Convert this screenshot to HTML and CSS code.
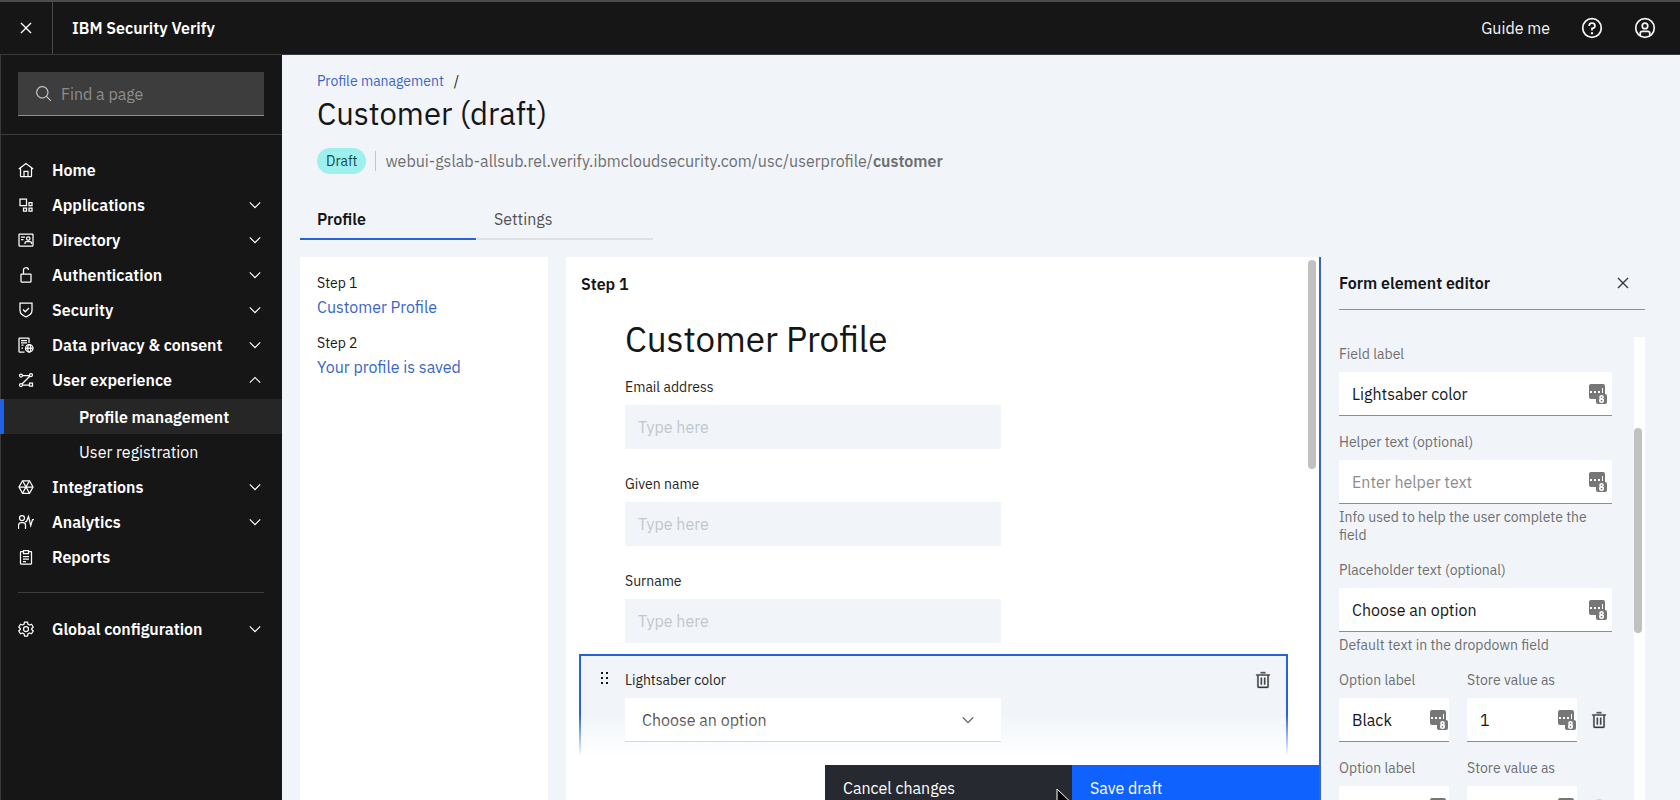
FILE: index.html
```
<!DOCTYPE html>
<html lang="en">
<head>
  <meta charset="UTF-8">
  <meta name="viewport" content="width=device-width, initial-scale=1">
  <title>Customer (draft) - IBM Security Verify</title>
  <link rel="stylesheet" href="styles.css">
</head>
<body>
  <!-- Icon sprite -->
  <svg class="sprite" aria-hidden="true">
    <symbol id="i-close" viewBox="0 0 32 32"><path fill="currentColor" d="M24 9.4L22.6 8 16 14.6 9.4 8 8 9.4 14.6 16 8 22.6 9.4 24 16 17.4 22.6 24 24 22.6 17.4 16z"/></symbol>
    <symbol id="i-chevron" viewBox="0 0 16 16"><path fill="currentColor" d="M8 11L3 6l.7-.7L8 9.6l4.3-4.3.7.7z"/></symbol>
    <symbol id="i-search" viewBox="0 0 32 32"><path fill="currentColor" d="M29 27.586l-7.552-7.552a11.018 11.018 0 1 0-1.414 1.414L27.586 29zM4 13a9 9 0 1 1 9 9 9.01 9.01 0 0 1-9-9z"/></symbol>
    <symbol id="i-help" viewBox="0 0 32 32"><g fill="none" stroke="currentColor" stroke-width="2.500"><circle cx="16" cy="16" r="13.500"/><path d="M12 13v-.5A3.5 3.5 0 0 1 15.500 9h1a3.500 3.500 0 0 1 0 7.500H16v3"/></g><circle cx="16" cy="23.500" r="1.700" fill="currentColor"/></symbol>
    <symbol id="i-user" viewBox="0 0 32 32"><g fill="none" stroke="currentColor" stroke-width="2.500"><circle cx="16" cy="16" r="13.500"/><circle cx="16" cy="13" r="4"/><path d="M9 26.500V24a3 3 0 0 1 3-3h8a3 3 0 0 1 3 3v2.500"/></g></symbol>
    <symbol id="i-home" viewBox="0 0 32 32"><g fill="none" stroke="currentColor" stroke-width="2.500"><path d="M1.600 14.200L16 3l14.400 11.200M5 12v16a1 1 0 0 0 1 1h20a1 1 0 0 0 1-1V12"/><path d="M12 29V18.500h8V29"/></g></symbol>
    <symbol id="i-apps" viewBox="0 0 32 32"><g fill="none" stroke="currentColor" stroke-width="2.500"><path d="M4 4h13v13H4z"/><path d="M22 11h6v6h-6zM11 22h6v6h-6zM22 22h6v6h-6z"/></g></symbol>
    <symbol id="i-directory" viewBox="0 0 32 32"><g fill="none" stroke="currentColor" stroke-width="2.500"><rect x="2" y="4" width="28" height="24" rx="1"/><path d="M6 10h8M6 15h5"/><circle cx="20.500" cy="13" r="3.500"/><path d="M14 24v-2a3 3 0 0 1 3-3h7a3 3 0 0 1 3 3v2"/></g></symbol>
    <symbol id="i-lock" viewBox="0 0 32 32"><g fill="none" stroke="currentColor" stroke-width="2.500"><rect x="6" y="14" width="20" height="16" rx="1"/><path d="M11 14V7a5 5 0 0 1 10-1"/></g></symbol>
    <symbol id="i-shield" viewBox="0 0 32 32"><g fill="none" stroke="currentColor" stroke-width="2.500"><path d="M4 2h24v15c0 5-3 9-12 13C7 26 4 22 4 17z"/><path d="M10 15l4.500 4.500L22 12"/></g></symbol>
    <symbol id="i-privacy" viewBox="0 0 32 32"><g fill="none" stroke="currentColor" stroke-width="2.500"><path d="M13 30H3a1 1 0 0 1-1-1V3a1 1 0 0 1 1-1h18a1 1 0 0 1 1 1v9"/><path d="M6 7h12M6 11.500h12M7 16h4M7 22h3"/><circle cx="22.500" cy="22.500" r="7.500"/><ellipse cx="22.500" cy="22.500" rx="3" ry="7.500"/><path d="M15 22.500h15"/></g></symbol>
    <symbol id="i-flow" viewBox="0 0 32 32"><g fill="none" stroke="currentColor" stroke-width="2.500"><circle cx="6" cy="7" r="3"/><circle cx="26" cy="6" r="3"/><circle cx="6" cy="26" r="3"/><path d="M23 22h6v6h-6zM9 7h14M24 8L8 24M9 26h14"/></g></symbol>
    <symbol id="i-integrations" viewBox="0 0 32 32"><g fill="none" stroke="currentColor" stroke-width="2.500"><path d="M9 3.500h14L30 16l-7 12.500H9L2 16z"/><path d="M2 16h28M9 3.500l14 25M23 3.500l-14 25"/></g></symbol>
    <symbol id="i-analytics" viewBox="0 0 32 32"><g fill="none" stroke="currentColor" stroke-width="2.500"><circle cx="8" cy="8" r="5"/><path d="M1 30v-7a6 6 0 0 1 6-6h3a5 5 0 0 1 5 5v8M14 15h3l4-10 4.500 18L29 11h3"/></g></symbol>
    <symbol id="i-reports" viewBox="0 0 32 32"><g fill="none" stroke="currentColor" stroke-width="2.500"><path d="M10 5H6a1 1 0 0 0-1 1v23a1 1 0 0 0 1 1h20a1 1 0 0 0 1-1V6a1 1 0 0 0-1-1h-4M11 3h10v6H11zM10 15h12M10 20h12M10 25h6"/></g></symbol>
    <symbol id="i-gear" viewBox="0 0 32 32"><g fill="none" stroke="currentColor" stroke-width="2.500" stroke-linejoin="round"><circle cx="16" cy="16" r="5"/><path d="M13 2h6l1 4.500 3 1.500 4-1.500 3.500 5.500-3 3v2l3 3-3.500 5.500-4-1.500-3 1.500-1 4.500h-6l-1-4.500L9 24l-4 1.500L1.500 20l3-3v-2l-3-3L5 6.500 9 8l3-1.500z"/></g></symbol>
    <symbol id="i-trash" viewBox="0 0 32 32"><path fill="currentColor" stroke="currentColor" stroke-width=".7" d="M12 12h2v12h-2zM18 12h2v12h-2zM4 6v2h2v20a2 2 0 0 0 2 2h16a2 2 0 0 0 2-2V8h2V6zm4 22V8h16v20zM12 2h8v2h-8z"/></symbol>
    <symbol id="i-drag" viewBox="0 0 10 14"><path fill="currentColor" d="M1 1h2v2H1zM6 1h2v2H6zM1 6h2v2H1zM6 6h2v2H6zM1 11h2v2H1zM6 11h2v2H6z"/></symbol>
    <symbol id="i-keypad" viewBox="0 0 18 20"><path fill="#777" d="M2 0h12a2 2 0 0 1 2 2v9H9a2 2 0 0 0-2 2v2H2a2 2 0 0 1-2-2V2a2 2 0 0 1 2-2z"/><path fill="#fff" d="M1 7h2v2H1zM5 7h2v2H5zM9 7h2v2H9zM13 4h1v5h-1z"/><rect x="7" y="10" width="11" height="10" rx="2" fill="#777"/><g fill="none" stroke="#fff" stroke-width="1.600"><circle cx="12.500" cy="13.200" r="1.500"/><circle cx="12.500" cy="16.600" r="1.700"/></g></symbol>
  </svg>

  <header class="topbar">
    <button class="menu-close" aria-label="Close menu"><svg class="icon-22"><use href="#i-close"/></svg></button>
    <span class="brand">IBM <b>Security Verify</b></span>
    <nav class="top-actions">
      <a href="#">Guide me</a>
      <button aria-label="Help"><svg class="icon-22"><use href="#i-help"/></svg></button>
      <button aria-label="Account"><svg class="icon-22"><use href="#i-user"/></svg></button>
    </nav>
  </header>

  <div class="shell">
    <aside class="sidebar">
      <div class="search">
        <label class="search-box">
          <svg class="icon-18"><use href="#i-search"/></svg>
          <input type="text" placeholder="Find a page" aria-label="Find a page">
        </label>
      </div>
      <nav class="nav">
        <a href="#"><svg class="icon-16"><use href="#i-home"/></svg><span>Home</span></a>
        <a href="#"><svg class="icon-16"><use href="#i-apps"/></svg><span>Applications</span><svg class="icon-18"><use href="#i-chevron"/></svg></a>
        <a href="#"><svg class="icon-16"><use href="#i-directory"/></svg><span>Directory</span><svg class="icon-18"><use href="#i-chevron"/></svg></a>
        <a href="#"><svg class="icon-16"><use href="#i-lock"/></svg><span>Authentication</span><svg class="icon-18"><use href="#i-chevron"/></svg></a>
        <a href="#"><svg class="icon-16"><use href="#i-shield"/></svg><span>Security</span><svg class="icon-18"><use href="#i-chevron"/></svg></a>
        <a href="#"><svg class="icon-16"><use href="#i-privacy"/></svg><span>Data privacy &amp; consent</span><svg class="icon-18"><use href="#i-chevron"/></svg></a>
        <a href="#"><svg class="icon-16"><use href="#i-flow"/></svg><span>User experience</span><svg class="icon-18 up"><use href="#i-chevron"/></svg></a>
        <div class="subnav">
          <a class="current" href="#">Profile management</a>
          <a href="#">User registration</a>
        </div>
        <a href="#"><svg class="icon-16"><use href="#i-integrations"/></svg><span>Integrations</span><svg class="icon-18"><use href="#i-chevron"/></svg></a>
        <a href="#"><svg class="icon-16"><use href="#i-analytics"/></svg><span>Analytics</span><svg class="icon-18"><use href="#i-chevron"/></svg></a>
        <a href="#"><svg class="icon-16"><use href="#i-reports"/></svg><span>Reports</span></a>
        <hr>
        <a href="#"><svg class="icon-16"><use href="#i-gear"/></svg><span>Global configuration</span><svg class="icon-18"><use href="#i-chevron"/></svg></a>
      </nav>
    </aside>

    <main class="content">
      <div class="page-head">
        <div class="breadcrumb"><a href="#">Profile management</a><span>/</span></div>
        <h1>Customer (draft)</h1>
        <div class="meta">
          <span class="tag">Draft</span>
          <span class="url">webui-gslab-allsub.rel.verify.ibmcloudsecurity.com/usc/userprofile/<b>customer</b></span>
        </div>
      </div>
      <div class="tabs" role="tablist">
        <button class="tab selected" role="tab" aria-selected="true">Profile</button>
        <button class="tab" role="tab" aria-selected="false">Settings</button>
      </div>

      <div class="workspace">
        <section class="steps">
          <div class="step"><span>Step 1</span><a href="#">Customer Profile</a></div>
          <div class="step"><span>Step 2</span><a href="#">Your profile is saved</a></div>
        </section>

        <section class="canvas">
          <div class="form-area">
            <h2>Step 1</h2>
            <h3>Customer Profile</h3>
            <div class="form-field">
              <label for="email">Email address</label>
              <input id="email" type="text" placeholder="Type here">
            </div>
            <div class="form-field">
              <label for="given">Given name</label>
              <input id="given" type="text" placeholder="Type here">
            </div>
            <div class="form-field">
              <label for="surname">Surname</label>
              <input id="surname" type="text" placeholder="Type here">
            </div>
            <div class="element">
              <svg class="drag"><use href="#i-drag"/></svg>
              <div class="element-body">
                <label for="saber">Lightsaber color</label>
                <div class="select">
                  <select id="saber"><option>Choose an option</option></select>
                  <svg class="icon-18"><use href="#i-chevron"/></svg>
                </div>
              </div>
              <button class="icon-button" aria-label="Delete element"><svg class="icon-18"><use href="#i-trash"/></svg></button>
            </div>
          </div>
          <div class="scroll-thumb"></div>
          <div class="actions">
            <button class="btn dark">Cancel changes</button>
            <button class="btn primary">Save draft</button>
            <svg class="pointer" viewBox="0 0 14 20"><path d="M1 1v16l4-3.500 3 6 2-1-3-6h6z" fill="#000" stroke="#fff"/></svg>
          </div>
        </section>

        <aside class="editor">
          <div class="editor-head">
            <h2>Form element editor</h2>
            <button class="icon-button" aria-label="Close editor"><svg class="icon-22"><use href="#i-close"/></svg></button>
          </div>
          <div class="editor-body">
            <div class="editor-track"><div class="editor-thumb"></div></div>
            <div class="field">
              <label for="f-label">Field label</label>
              <div class="text-box"><input id="f-label" type="text" value="Lightsaber color"><svg class="keypad"><use href="#i-keypad"/></svg></div>
            </div>
            <div class="field">
              <label for="f-helper">Helper text (optional)</label>
              <div class="text-box"><input id="f-helper" type="text" placeholder="Enter helper text"><svg class="keypad"><use href="#i-keypad"/></svg></div>
              <p>Info used to help the user complete the field</p>
            </div>
            <div class="field">
              <label for="f-placeholder">Placeholder text (optional)</label>
              <div class="text-box"><input id="f-placeholder" type="text" value="Choose an option"><svg class="keypad"><use href="#i-keypad"/></svg></div>
              <p>Default text in the dropdown field</p>
            </div>
            <div class="option-row">
              <div class="field">
                <label for="o1">Option label</label>
                <div class="text-box"><input id="o1" type="text" value="Black"><svg class="keypad"><use href="#i-keypad"/></svg></div>
              </div>
              <div class="field">
                <label for="v1">Store value as</label>
                <div class="text-box"><input id="v1" type="text" value="1"><svg class="keypad"><use href="#i-keypad"/></svg></div>
              </div>
              <button class="icon-button" aria-label="Delete option"><svg class="icon-18"><use href="#i-trash"/></svg></button>
            </div>
            <div class="option-row">
              <div class="field">
                <label for="o2">Option label</label>
                <div class="text-box"><input id="o2" type="text"><svg class="keypad"><use href="#i-keypad"/></svg></div>
              </div>
              <div class="field">
                <label for="v2">Store value as</label>
                <div class="text-box"><input id="v2" type="text"><svg class="keypad"><use href="#i-keypad"/></svg></div>
              </div>
              <button class="icon-button" aria-label="Delete option"><svg class="icon-18"><use href="#i-trash"/></svg></button>
            </div>
          </div>
        </aside>
      </div>
    </main>
  </div>
</body>
</html>
```
FILE: styles.css
```
/* Global */
* {
  box-sizing: border-box;
}
body {
  margin: 0;
  height: 100vh;
  display: flex;
  flex-direction: column;
  overflow: hidden;
  font-family: "IBM Plex Sans", Roboto, "Liberation Sans", sans-serif;
  font-size: 16px;
  line-height: 20px;
  color: #161616;
  background: #f1f5fa;
}
h1, h2, h3, p {
  margin: 0;
  font-weight: 400;
}
h2 {
  font-size: 16px;
}
a {
  color: inherit;
  text-decoration: none;
}
b {
  font-weight: 600;
}
button, input, select {
  font: inherit;
  color: inherit;
  border: 0;
  border-radius: 0;
  background: none;
  padding: 0;
  margin: 0;
}
svg {
  display: block;
  flex: none;
}
.sprite {
  position: absolute;
  width: 0;
  height: 0;
}
.icon-16 {
  width: 16px;
  height: 16px;
}
.icon-18 {
  width: 18px;
  height: 18px;
}
.icon-22 {
  width: 22px;
  height: 22px;
}
.up {
  transform: rotate(180deg);
}

/* Top bar */
.topbar {
  flex: none;
  display: flex;
  align-items: stretch;
  height: 55px;
  background: #161616;
  border-top: 2px solid #4a4d50;
  border-bottom: 1px solid #393939;
  color: #fff;
}
.menu-close {
  width: 53px;
  padding-left: 15px;
  border-right: 1px solid #4a4a4a;
}
.brand {
  padding-left: 19px;
  align-self: center;
  font-weight: 600;
}
.top-actions {
  margin-left: auto;
  padding-right: 24px;
  display: flex;
  align-items: center;
  gap: 31px;
  color: #f4f4f4;
}

/* Sidebar */
.shell {
  flex: 1;
  min-height: 0;
  display: flex;
}
.sidebar {
  flex: none;
  width: 282px;
  background: #161616;
  border-left: 1px solid #393939;
  color: #fff;
}
.search {
  padding: 17px 18px 18px 17px;
  border-bottom: 1px solid #393d40;
}
.search-box {
  display: flex;
  align-items: center;
  gap: 8px;
  height: 44px;
  padding-left: 17px;
  background: #3d3d3d;
  border-bottom: 1px solid #8d8d8d;
  color: #c6c6c6;
}
.search-box input {
  flex: 1;
  min-width: 0;
}
.search-box input::placeholder {
  color: #8d8d8d;
  opacity: 1;
}
.nav {
  padding-top: 17px;
  font-weight: 600;
}
.nav > a {
  display: flex;
  align-items: center;
  gap: 18px;
  height: 35px;
  padding: 0 18px 0 17px;
}
.nav span {
  flex: 1;
}
.subnav {
  margin: 2px 0 0 -1px;
}
.subnav a {
  display: block;
  height: 35px;
  padding: 8px 0 0 75px;
  border-left: 4px solid transparent;
  font-weight: 400;
}
.subnav .current {
  background: #262626;
  border-left-color: #1f62e8;
  font-weight: 600;
}
.nav hr {
  margin: 18px 18px 18px 17px;
  border: 0;
  border-top: 1px solid #393d40;
}

/* Page header */
.content {
  flex: 1;
  min-width: 0;
  display: flex;
  flex-direction: column;
}
.page-head {
  padding: 16px 35px 0;
}
.breadcrumb {
  display: flex;
  gap: 10px;
  font-size: 14px;
}
.breadcrumb a, .step a {
  color: #3a66c8;
}
h1 {
  margin-top: 4px;
  font-size: 31px;
  line-height: 38px;
}
.meta {
  display: flex;
  align-items: center;
  gap: 9px;
  margin-top: 15px;
}
.tag {
  padding: 3px 9px;
  border-radius: 14px;
  background: #9ef0ee;
  color: #134c4e;
  font-size: 14px;
}
.url {
  padding-left: 9px;
  border-left: 1px solid #c6c6c6;
  color: #6f6f6f;
}
.tabs {
  display: flex;
  gap: 1px;
  margin: 21px 18px 17px;
}
.tab {
  width: 176px;
  height: 45px;
  padding: 5px 0 0 17px;
  text-align: left;
  color: #525252;
  border-bottom: 2px solid #dde1e6;
}
.tab.selected {
  color: #161616;
  font-weight: 600;
  border-bottom-color: #2563d9;
}

/* Workspace */
.workspace {
  flex: 1;
  min-height: 0;
  display: flex;
  padding-left: 18px;
}
.steps {
  flex: none;
  width: 248px;
  margin-right: 18px;
  padding: 16px 17px;
  background: #fff;
}
.step {
  display: flex;
  flex-direction: column;
  gap: 4px;
  margin-bottom: 16px;
}
.step span {
  font-size: 14px;
}
.canvas {
  position: relative;
  flex: 1;
  min-width: 0;
  display: flex;
  flex-direction: column;
  background: #fff;
}
.form-area {
  position: relative;
  flex: 1;
  min-height: 0;
  overflow: hidden;
  padding: 17px 31px 0 13px;
}
/* fade above the action bar */
.form-area::after {
  content: "";
  position: absolute;
  left: 0;
  right: 0;
  bottom: 0;
  height: 42px;
  background: linear-gradient(rgba(255, 255, 255, 0), #fff);
  pointer-events: none;
}
.form-area h2 {
  padding-left: 2px;
  font-weight: 600;
}
h3 {
  margin: 23px 0 17px;
  padding-left: 46px;
  font-size: 35px;
  line-height: 44px;
}
.form-field {
  margin-bottom: 26px;
  padding-left: 46px;
}
.form-field:nth-of-type(3) {
  margin-bottom: 11px;
}
.form-field label, .element label {
  display: block;
  margin-bottom: 9px;
  font-size: 14px;
  line-height: 18px;
  color: #262626;
}
.form-field input {
  display: block;
  width: 376px;
  height: 44px;
  padding: 0 13px;
  background: #f1f5fa;
}
.form-field input::placeholder {
  color: #c1c7cd;
  opacity: 1;
}
.element {
  display: flex;
  align-items: flex-start;
  height: 130px;
  padding: 15px 14px;
  border: 2px solid #2563d9;
  background: #f1f5fa;
}
.drag {
  width: 10px;
  height: 14px;
  margin: 0 15px 0 5px;
}
.element-body {
  width: 376px;
  margin-right: auto;
}
.select {
  position: relative;
  color: #393939;
}
.select select {
  appearance: none;
  width: 100%;
  height: 44px;
  padding: 0 17px;
  background: #fff;
  border-bottom: 1px solid #8d8d8d;
}
.select svg {
  position: absolute;
  top: 13px;
  right: 24px;
  pointer-events: none;
}
.scroll-thumb {
  position: absolute;
  top: 3px;
  right: 3px;
  width: 8px;
  height: 209px;
  border-radius: 4px;
  background: #c1c1c1;
}
.actions {
  position: relative;
  display: flex;
  justify-content: flex-end;
  height: 35px;
  margin-top: 9px;
}
.btn {
  flex: none;
  width: 247px;
  height: 46px;
  padding-left: 18px;
  text-align: left;
  color: #fff;
}
.btn.dark {
  background: #262a30;
}
.btn.primary {
  background: #0f62fe;
}
/* mouse pointer over the action bar */
.pointer {
  position: absolute;
  top: 23px;
  right: 249px;
  width: 14px;
  height: 20px;
}

/* Element editor */
.editor {
  flex: none;
  width: 361px;
  padding: 0 35px 0 18px;
  border-left: 2px solid #3665bf;
  overflow: hidden;
}
.editor-head {
  display: flex;
  align-items: center;
  justify-content: space-between;
  height: 53px;
  padding-right: 11px;
  border-bottom: 1px solid #8d9296;
}
.editor-head h2 {
  font-weight: 600;
}
.editor-body {
  position: relative;
  padding: 35px 33px 0 0;
}
.editor-track {
  position: absolute;
  top: 27px;
  right: 0;
  width: 11px;
  height: 100vh;
  background: #fff;
}
.editor-thumb {
  width: 8px;
  height: 205px;
  margin-top: 91px;
  border-radius: 4px;
  background: #c1c1c1;
}
.field {
  margin-bottom: 17px;
  font-size: 14px;
  line-height: 18px;
  color: #6f6f6f;
}
.field label {
  display: block;
  margin-bottom: 9px;
}
.field p {
  margin-top: 4px;
}
.text-box {
  display: flex;
  align-items: center;
  height: 44px;
  padding: 0 5px 0 13px;
  background: #fff;
  border-bottom: 1px solid #8d8d8d;
}
.text-box input {
  flex: 1;
  min-width: 0;
  font-size: 16px;
  color: #161616;
}
.text-box input::placeholder {
  color: #8d8d8d;
  opacity: 1;
}
.keypad {
  width: 18px;
  height: 20px;
}
.option-row {
  display: grid;
  grid-template-columns: 110px 110px 18px;
  column-gap: 18px;
}
.option-row .text-box {
  padding-right: 1px;
}
.option-row .icon-button {
  align-self: start;
  margin-top: 40px;
  margin-left: -5px;
}
.icon-button {
  color: #393939;
}
```
